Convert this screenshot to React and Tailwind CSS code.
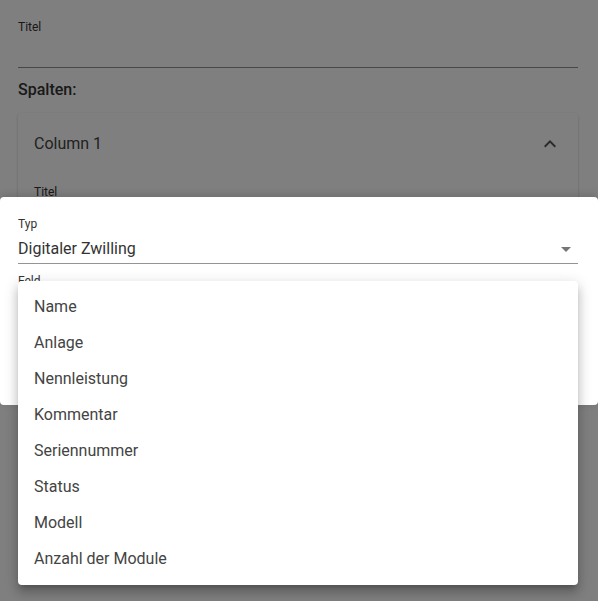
import React from 'react';

const fields = ['Name', 'Anlage', 'Nennleistung', 'Kommentar', 'Seriennummer', 'Status', 'Modell', 'Anzahl der Module'];

const App = () => {
  return (
    <div
      className="relative w-[598px] h-[601px] overflow-hidden bg-white text-[#212121]"
      style={{ fontFamily: 'Roboto, "Liberation Sans", sans-serif' }}
    >
      {/* page behind the overlay */}
      <div className="pl-[18px] pr-[20px] pt-[20px]">
        <div className="text-[12px] leading-[14px] text-[#333]">Titel</div>
        <div className="h-[34px] border-b border-[#8f8f8f]" />
        <div className="mt-[12px] text-[16px] leading-[20px] font-medium text-[#333]">Spalten:</div>
        <div className="mt-[13px] rounded-[4px] bg-white shadow-[0_1px_3px_rgba(0,0,0,0.2)] px-4 h-[140px]">
          <div className="flex items-center justify-between h-[62px]">
            <span className="text-[16px] text-[#444]">Column 1</span>
            <svg width="24" height="24" viewBox="0 0 24 24" className="fill-[#555]">
              <path d="M7.41 15.41 12 10.83l4.59 4.58L18 14l-6-6-6 6z" />
            </svg>
          </div>
          <div className="pt-[10px] text-[12px] leading-[14px] text-[#333]">Titel</div>
        </div>
      </div>

      <div className="absolute inset-0 bg-black/50" />

      {/* dialog section */}
      <div className="absolute top-[197px] left-0 w-[598px] h-[208px] bg-white rounded-[4px] pl-[18px] pr-[20px] pt-[20px] shadow-[0_-2px_8px_rgba(0,0,0,0.15)]">
        <div className="text-[12px] leading-[14px] text-[#333]">Typ</div>
        <div className="flex items-center justify-between h-[33px] pt-[3px] border-b border-[#949494]">
          <span className="text-[16px] text-[#333]">Digitaler Zwilling</span>
          <svg width="24" height="24" viewBox="0 0 24 24" className="fill-[#757575]">
            <path d="M7 10l5 5 5-5z" />
          </svg>
        </div>
        <div className="mt-[10px] text-[12px] leading-[14px] text-[#333]">Feld</div>
      </div>

      {/* select menu */}
      <ul className="absolute top-[281px] left-[18px] w-[560px] bg-white rounded-[4px] py-2 shadow-[0_5px_5px_-3px_rgba(0,0,0,0.2),0_8px_10px_1px_rgba(0,0,0,0.14),0_3px_14px_2px_rgba(0,0,0,0.12)]">
        {fields.map((f) => (
          <li key={f} className="h-[36px] flex items-center px-4 text-[16px] text-[#444]">
            {f}
          </li>
        ))}
      </ul>
    </div>
  );
};

export default App;
